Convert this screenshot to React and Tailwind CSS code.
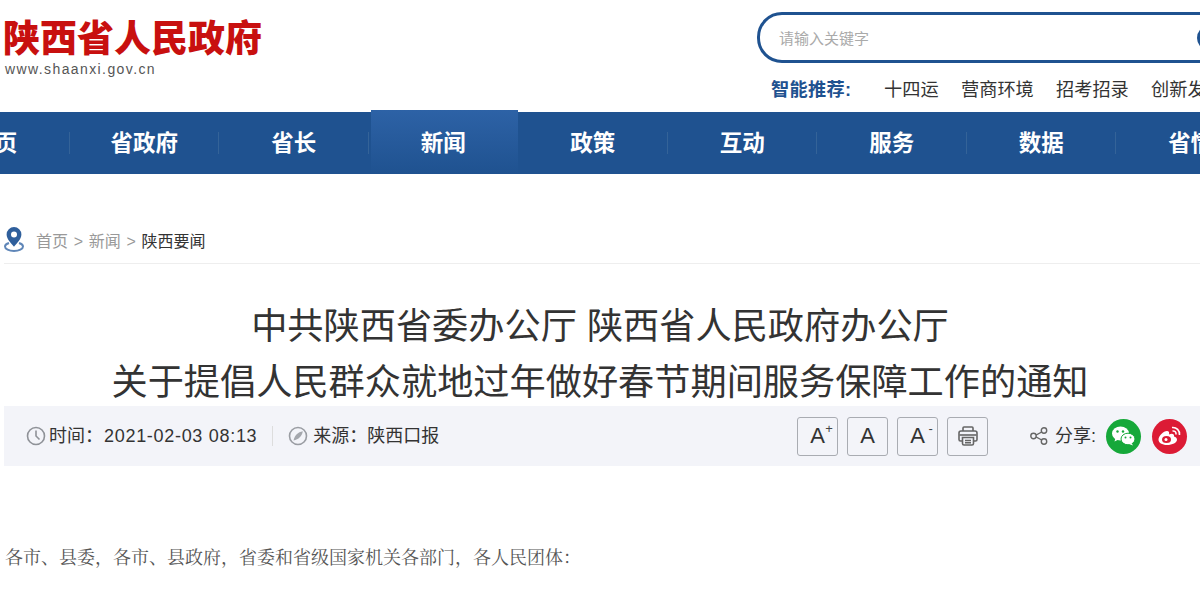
import React from "react";

const CJK = { fontFamily: '"Liberation Sans", "Noto Sans CJK SC", sans-serif' };
const NAV = [
  { t: "首页" }, { t: "省政府" }, { t: "省长" }, { t: "新闻", active: true }, { t: "政策" },
  { t: "互动" }, { t: "服务" }, { t: "数据" }, { t: "省情" },
];

function Pin() {
  return (
    <svg width="20" height="26" viewBox="0 0 20 26" className="shrink-0">
      <path d="M5 17c-2.500.800-4 2-4 3.500C1 23 5 25 10 25s9-2 9-4.500c0-1.500-1.500-2.700-4-3.500" fill="none" stroke="#5f86b8" strokeWidth="2" />
      <path d="M10 1a7.400 7.400 0 0 0-7.400 7.400c0 4.800 5 9.200 7.400 12.300 2.400-3.100 7.400-7.500 7.400-12.300A7.400 7.400 0 0 0 10 1z" fill="#2f5f9c" />
      <circle cx="10" cy="8.500" r="3" fill="#fff" />
    </svg>
  );
}

function Clock() {
  return (
    <svg width="20" height="20" viewBox="0 0 20 20" className="shrink-0">
      <circle cx="10" cy="10" r="8.500" fill="none" stroke="#8f9298" strokeWidth="1.600" />
      <path d="M10 4.500V10l3.500 3.500" fill="none" stroke="#8f9298" strokeWidth="1.600" />
    </svg>
  );
}

function Quill() {
  return (
    <svg width="20" height="20" viewBox="0 0 20 20" className="shrink-0">
      <circle cx="10" cy="10" r="8.500" fill="none" stroke="#9a9da3" strokeWidth="1.600" />
      <path d="M5.500 14.500C6.500 9.500 10 6 14.800 5.200 14.200 10 10.500 13.500 5.500 14.500z" fill="#a4a7ad" />
    </svg>
  );
}

function FontBtn({ children, sup }) {
  return (
    <div className="flex h-[39px] w-[41px] items-center justify-center rounded-[3px] border border-[#a9acb2] text-[22px] leading-none text-[#333]">
      <span className="relative">
        {children}
        {sup && <span className="absolute -right-[8px] -top-[3px] text-[13px] leading-none text-[#444]">{sup}</span>}
      </span>
    </div>
  );
}

function Printer() {
  return (
    <svg width="22" height="22" viewBox="0 0 22 22">
      <path d="M6 6V3a1 1 0 0 1 1-1h8a1 1 0 0 1 1 1v3" fill="none" stroke="#666" strokeWidth="1.600" />
      <path d="M5 16H3.500A1.500 1.500 0 0 1 2 14.500V8a2 2 0 0 1 2-2h14a2 2 0 0 1 2 2v6.500a1.500 1.500 0 0 1-1.500 1.500H17" fill="none" stroke="#666" strokeWidth="1.600" />
      <path d="M2.500 10h17" stroke="#666" strokeWidth="1.600" />
      <path d="M5.500 12.500h11v6a1.500 1.500 0 0 1-1.500 1.500H7a1.500 1.500 0 0 1-1.500-1.500z" fill="none" stroke="#666" strokeWidth="1.600" />
      <path d="M8 15.500h6M8 17.800h6" stroke="#666" strokeWidth="1.400" />
    </svg>
  );
}

function Share() {
  return (
    <svg width="20" height="20" viewBox="0 0 20 20">
      <path d="M14.500 5 5.500 10l9 5" fill="none" stroke="#666" strokeWidth="1.400" />
      <circle cx="15" cy="4.500" r="2.700" fill="#f3f4f9" stroke="#666" strokeWidth="1.400" />
      <circle cx="4.500" cy="10" r="2.700" fill="#f3f4f9" stroke="#666" strokeWidth="1.400" />
      <circle cx="15" cy="15.500" r="2.700" fill="#f3f4f9" stroke="#666" strokeWidth="1.400" />
    </svg>
  );
}

function WeChat() {
  return (
    <div className="flex h-[35px] w-[35px] items-center justify-center rounded-full bg-[#16a83a]">
      <svg width="25" height="22" viewBox="0 0 25 22">
        <ellipse cx="9.500" cy="8.500" rx="8.500" ry="7" fill="#fff" />
        <path d="M4.500 13l-1 3.500 4-2z" fill="#fff" />
        <ellipse cx="17" cy="14" rx="7" ry="5.800" fill="#fff" stroke="#16a83a" strokeWidth="1" />
        <path d="M20.500 18l1.500 2.500-4-1.500z" fill="#fff" />
        <circle cx="6.500" cy="6.500" r="1.200" fill="#16a83a" />
        <circle cx="12" cy="6.500" r="1.200" fill="#16a83a" />
        <circle cx="14.500" cy="12.500" r="1" fill="#16a83a" />
        <circle cx="19.500" cy="12.500" r="1" fill="#16a83a" />
      </svg>
    </div>
  );
}

function Weibo() {
  return (
    <div className="flex h-[35px] w-[35px] items-center justify-center rounded-full bg-[#dc1b35]">
      <svg width="25" height="22" viewBox="0 0 25 22">
        <path d="M10 20c-5 0-8.500-2.300-8.500-5.500 0-3.500 5-8.500 8.500-8.500 2 0 2.500 1.500 2 3.500 3-1.200 5.500-.8 5 2 2 .6 3 1.700 3 3.200C20 17.500 15.500 20 10 20z" fill="#fff" />
        <ellipse cx="9.500" cy="14.500" rx="4.500" ry="3.500" fill="#dc1b35" />
        <circle cx="9" cy="14.500" r="1.500" fill="#fff" />
        <path d="M15 2.500c4.500-.5 8 3 7.500 7.500M15.500 6c2.500-.3 3.800 1.200 3.500 3.500" fill="none" stroke="#fff" strokeWidth="1.600" />
      </svg>
    </div>
  );
}

export default function App() {
  return (
    <div className="h-[598px] w-[1200px] overflow-hidden bg-white" style={CJK}>
      <header className="flex h-[112px]">
        <div className="ml-[3px] w-[263px] shrink-0 pt-[20px]">
          <div className="whitespace-nowrap text-[37px] font-black leading-[40px] text-[#c8100f]">陕西省人民政府</div>
          <div className="mt-[1px] pl-[2px] text-[14px] leading-[16px] tracking-[1.4px] text-[#555]">www.shaanxi.gov.cn</div>
        </div>
        <div className="ml-[491px] w-[520px] shrink-0 pt-3">
          <div className="flex h-[51px] items-center justify-between rounded-l-[25px] border-[3px] border-[#1f5290] pl-[19px]">
            <span className="mt-[3px] text-[15px] text-[#aaa]">请输入关键字</span>
            <span className="mr-[51px] h-[26px] w-[26px] rounded-full bg-[#1f5290]" />
          </div>
          <div className="mt-[15px] flex items-center whitespace-nowrap pl-[14px] text-[18.2px] leading-[24px] text-[#333]">
            <span className="w-[113px] font-bold tracking-[0.3px] text-[#1f5290]">智能推荐:</span>
            <span className="w-[77px]">十四运</span>
            <span className="w-[95px]">营商环境</span>
            <span className="w-[95px]">招考招录</span>
            <span>创新发展</span>
          </div>
        </div>
      </header>

      <nav className="-ml-[80px] flex h-[62px] w-[1400px] bg-[#1f5290]">
        {NAV.map((n) => (
          <div key={n.t} className="relative flex h-full w-[149.5px] shrink-0 items-center justify-center pt-[1px] text-[22.5px] font-bold text-white">
            {n.active && <div className="absolute -top-[2px] bottom-0 left-[2px] right-0 bg-gradient-to-b from-[#2d62a6] to-[#1f5290]" />}
            <span className="relative">{n.t}</span>
            {!n.active && <span className="absolute right-0 top-[20px] h-[22px] w-px bg-[#346398]" />}
          </div>
        ))}
      </nav>

      <div className="ml-1 mt-[52px] flex h-[38px] items-start gap-[12px] border-b border-[#eee]">
        <Pin />
        <div className="pt-[6px] text-[16px] leading-[20px] text-[#999]">
          首页<span className="mx-[1.25px]"> &gt; </span>新闻<span className="mx-[1.25px]"> &gt; </span><span className="text-[#333]">陕西要闻</span>
        </div>
      </div>

      <h1 className="mt-[35px] text-center text-[36.2px] font-normal leading-[56px] text-[#333]">
        <div>中共陕西省委办公厅 陕西省人民政府办公厅</div>
        <div>关于提倡人民群众就地过年做好春节期间服务保障工作的通知</div>
      </h1>

      <div className="ml-1 mt-[-5px] flex h-[60px] items-center bg-[#f3f4f9] text-[18px] text-[#333]">
        <div className="ml-[22px] flex items-center gap-[3px]">
          <Clock />
          <span>{"时间\uFF1A"}</span>
          <span className="-ml-[2px] tracking-[0.7px]">2021-02-03 08:13</span>
        </div>
        <span className="ml-[15px] h-5 w-px bg-[#ddd]" />
        <div className="ml-[15px] flex items-center gap-[5px]">
          <Quill />
          <span>{"来源\uFF1A"}</span>
          <span className="-ml-[5px]">陕西口报</span>
        </div>
        <div className="ml-auto flex items-center gap-[9px]">
          <FontBtn sup="+">A</FontBtn>
          <FontBtn>A</FontBtn>
          <FontBtn sup="-">A</FontBtn>
          <div className="flex h-[39px] w-[41px] items-center justify-center rounded-[3px] border border-[#a9acb2]"><Printer /></div>
        </div>
        <div className="ml-[41px] mr-[13px] flex items-center">
          <Share />
          <span className="ml-[6px] mr-[11px] w-[40px] whitespace-nowrap">分享:</span>
          <WeChat />
          <span className="w-[11px]" />
          <Weibo />
        </div>
      </div>

      <p className="ml-[5px] mt-[80px] whitespace-nowrap text-[18px] leading-[24px] text-[#555]" style={{ fontFamily: '"Liberation Serif", "Noto Serif CJK SC", "Noto Sans CJK SC", serif' }}>
        {"各市、县委\uFF0C各市、县政府\uFF0C省委和省级国家机关各部门\uFF0C各人民团体\uFF1A"}
      </p>
    </div>
  );
}
